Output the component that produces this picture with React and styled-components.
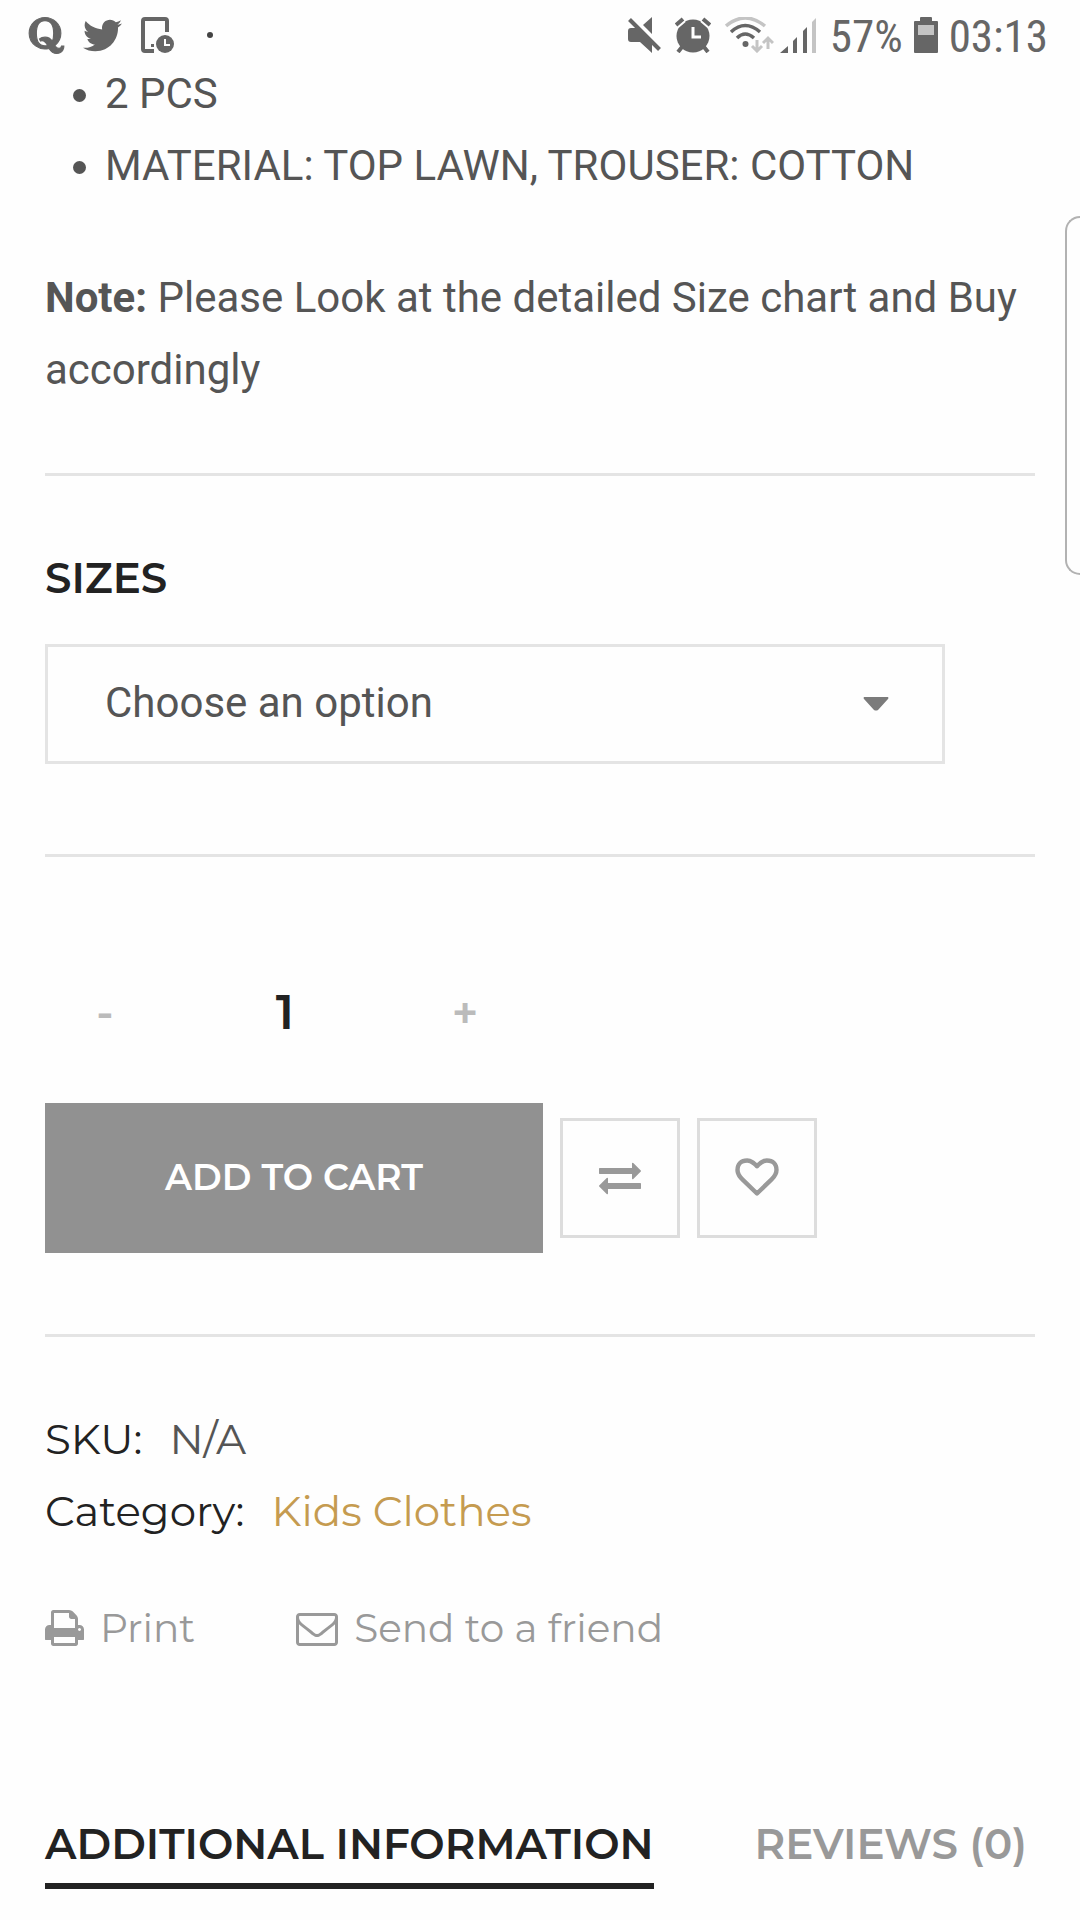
import React, { useState } from "react";
import styled, { createGlobalStyle } from "styled-components";
import { FaQuora, FaTwitter } from "react-icons/fa";

const bodyFont = `Roboto, "Liberation Sans", sans-serif`;
const headingFont = `Montserrat, Inter, "Open Sans", sans-serif`;
const ink = "#222";
const text = "#555";
const muted = "#999";
const rule = "#e4e4e4";

const GlobalStyle = createGlobalStyle`
  *, *::before, *::after { box-sizing: border-box; }
  body { margin: 0; background: #fefefe; color: ${text}; font-family: ${bodyFont}; font-size: 42px; line-height: 72px; }
  button, input, select { font: inherit; color: inherit; margin: 0; padding: 0; border: 0; background: none; border-radius: 0; }
  button { cursor: pointer; }
  a { text-decoration: none; }
  svg { display: block; flex: none; }
`;

const Page = styled.div`
  position: relative;
  overflow: hidden;
`;

const StatusBar = styled.header`
  display: flex;
  justify-content: space-between;
  height: 58px;
  padding: 12px 32px 0 26px;
  color: #666;
`;

const StatusGroup = styled.div`
  display: flex;
  align-items: center;
  gap: ${(p) => p.$gap}px;
`;

const StatusText = styled.span`
  padding-top: 4px;
  font-family: "Roboto Condensed", "Liberation Sans Narrow", Roboto, sans-serif;
  font-size: 45px;
  line-height: 46px;
`;

const MoreDot = styled.span`
  width: 6px;
  height: 6px;
  margin-left: 16px;
  border-radius: 50%;
  background: #444;
`;

const Product = styled.main`
  padding: 0 45px;
`;

const Features = styled.ul`
  margin: 0;
  padding: 0 0 0 28px;
  list-style: none;
`;

const Feature = styled.li`
  display: flex;
  align-items: center;
  gap: 19px;
  &::before {
    content: "";
    width: 13px;
    height: 13px;
    margin-top: 2px;
    border-radius: 50%;
    background: ${text};
  }
`;

const Note = styled.p`
  margin: 60px 0 67px;
`;

const Rule = styled.hr`
  height: 3px;
  margin: 0;
  border: 0;
  background: ${rule};
`;

const SizeSection = styled.section`
  display: flex;
  flex-direction: column;
  gap: 30px;
  padding: 66px 0 90px;
`;

const SizeLabel = styled.label`
  color: ${ink};
  font-family: ${headingFont};
  font-weight: 600;
`;

const SelectBox = styled.div`
  display: grid;
  align-items: center;
  width: calc(100% - 90px);
  height: 120px;
  > * { grid-area: 1 / 1; }
  svg { justify-self: end; margin-right: 56px; pointer-events: none; }
`;

const SizeSelect = styled.select`
  width: 100%;
  height: 120px;
  padding: 0 57px 2px;
  border: 3px solid ${rule};
  appearance: none;
`;

const BuySection = styled.section`
  padding: 95px 0 81px;
`;

const Quantity = styled.div`
  display: grid;
  grid-template-columns: 120px 240px 120px;
  height: 120px;
  margin-bottom: 31px;
  font-family: ${headingFont};
  font-weight: 600;
`;

const Step = styled.button`
  color: #bbb;
  font-size: 45px;
`;

const QuantityInput = styled.input`
  width: 100%;
  color: ${ink};
  font-size: 48px;
  text-align: center;
`;

const Actions = styled.div`
  display: flex;
  align-items: center;
  gap: 17px;
`;

const CartButton = styled.button`
  width: 498px;
  height: 150px;
  padding-bottom: 2px;
  background: #919191;
  color: #fff;
  font-family: ${headingFont};
  font-size: 36px;
  font-weight: 600;
`;

const IconButton = styled.button`
  display: grid;
  place-items: center;
  width: 120px;
  height: 120px;
  padding-bottom: 3px;
  border: 3px solid #ddd;
  color: ${muted};
`;

const Meta = styled.dl`
  margin: 0;
  padding: 66px 0 45px;
  font-family: ${headingFont};
`;

const MetaRow = styled.div`
  display: flex;
  gap: 27px;
  dt { color: ${ink}; }
  dd { margin: 0; }
  a { color: #c59b50; }
`;

const Share = styled.nav`
  display: flex;
  gap: 101px;
  padding-bottom: 144px;
  font-family: ${headingFont};
  font-size: 39px;
`;

const ShareLink = styled.a`
  display: flex;
  align-items: center;
  gap: 16px;
  color: ${muted};
`;

const Tabs = styled.div`
  display: flex;
  justify-content: space-between;
  padding-right: 8px;
`;

const Tab = styled.button`
  padding-bottom: 3px;
  border-bottom: 6px solid ${(p) => (p.$active ? ink : "transparent")};
  color: ${(p) => (p.$active ? ink : muted)};
  font-family: ${headingFont};
  font-weight: 600;
  white-space: nowrap;
`;

const EdgeHandle = styled.div`
  position: absolute;
  top: 216px;
  right: 0;
  width: 15px;
  height: 359px;
  border: 2px solid #b2b2b2;
  border-right: 0;
  border-radius: 20px 0 0 20px;
`;

const Glyph = ({ d, box = "0 0 1792 1792", w = 42, h = 42, bold = 0 }) => (
  <svg width={w} height={h} viewBox={box} fill="currentColor" stroke="currentColor" strokeWidth={bold} overflow="visible" aria-hidden="true">
    <path d={d} />
  </svg>
);

const exchange =
  "M1792 1184v192q0 13-9.5 22.5t-22.5 9.5h-1376v192q0 13-9.5 22.5t-22.5 9.5q-12 0-24-10l-319-320q-9-9-9-22 0-14 9-23l320-320q9-9 23-9 13 0 22.5 9.5t9.5 22.5v192h1376q13 0 22.5 9.5t9.5 22.5zm0-544q0 14-9 23l-320 320q-9 9-23 9-13 0-22.5-9.5t-9.5-22.5v-192h-1376q-13 0-22.5-9.5t-9.5-22.5v-192q0-13 9.5-22.5t22.5-9.5h1376v-192q0-14 9-23t23-9q12 0 24 10l319 319q9 9 9 23z";
const heart =
  "M1664 596q0-81-21.5-143t-55-98.5-81.5-59.5-94-31-98-8-112 25.5-110.5 64-86.5 72-60 61.5q-18 22-49 22t-49-22q-24-28-60-61.5t-86.5-72-110.5-64-112-25.5-98 8-94 31-81.5 59.5-55 98.5-21.5 143q0 168 187 355l581 560 580-559q188-188 188-356zm128 0q0 221-229 450l-623 600q-18 18-44 18t-44-18l-624-602q-10-8-27.5-26t-55.5-65.5-68-97.5-53.5-121-23.5-138q0-220 127-344t351-124q62 0 126.5 21.5t120 58 95.5 68.5 76 68q36-36 76-68t95.5-68.5 120-58 126.5-21.5q224 0 351 124t127 344z";
const printer =
  "M448 1536h896v-256h-896v256zm0-640h896v-384h-160q-40 0-68-28t-28-68v-160h-640v640zm1152 64q0-26-19-45t-45-19-45 19-19 45 19 45 45 19 45-19 19-45zm128 0v416q0 13-9.5 22.5t-22.5 9.5h-224v160q0 40-28 68t-68 28h-960q-40 0-68-28t-28-68v-160h-224q-13 0-22.5-9.5t-9.5-22.5v-416q0-79 56.5-135.5t135.5-56.5h64v-544q0-40 28-68t68-28h672q40 0 88 20t76 48l152 152q28 28 48 76t20 88v256h64q79 0 135.5 56.5t56.5 135.5z";
const envelope =
  "M1664 1504v-768q-32 36-69 66-268 206-426 338-51 43-83 67t-86.5 48.5-102.5 24.5h-2q-48 0-102.5-24.5t-86.5-48.5-83-67q-158-132-426-338-37-30-69-66v768q0 13 9.5 22.5t22.5 9.5h1472q13 0 22.5-9.5t9.5-22.5zm0-1051v-24.5l-.5-13-3-12.5-5.5-9-9-7.5-14-2.5h-1472q-13 0-22.5 9.5t-9.5 22.5q0 168 147 284 193 152 401 317 6 5 35 29.5t46 37.5 44.5 31.5 50.5 27.5 43 9h2q20 0 43-9t50.5-27.5 44.5-31.5 46-37.5 35-29.5q208-165 401-317 54-43 100.5-115.5t46.5-131.5zm128-37v1088q0 66-47 113t-113 47h-1472q-66 0-113-47t-47-113v-1088q0-66 47-113t113-47h1472q66 0 113 47t47 113z";

const DeviceClock = () => (
  <svg width="37" height="36" viewBox="-3 0 37 36" fill="none" aria-hidden="true">
    <path d="M26 15V4q0-2-2-2H4Q2 2 2 4v28q0 2 2 2h9" stroke="currentColor" strokeWidth="4" />
    <rect x="10" y="27" width="3" height="3" fill="currentColor" />
    <circle cx="24" cy="27" r="9" fill="currentColor" />
    <path d="M24 22v6h5" stroke="#fefefe" strokeWidth="2" />
  </svg>
);

const Muted = () => (
  <svg width="33" height="36" viewBox="0 0 33 36" fill="currentColor" aria-hidden="true">
    <path d="M24 0v17L15 8zM0 14q0-3 3-3h7l14 14v11L12 25H3q-3 0-3-3z" />
    <path d="M4 0l29 29" stroke="#fefefe" strokeWidth="2" />
    <path d="M1.500 2.500L31.500 32.500" stroke="currentColor" strokeWidth="4" />
  </svg>
);

const Alarm = () => (
  <svg width="36" height="36" viewBox="0 0 36 36" fill="none" aria-hidden="true">
    <circle cx="18" cy="19" r="16.500" fill="currentColor" />
    <path d="M1 8l7-6M28 2l7 6" stroke="#fefefe" strokeWidth="8" />
    <path d="M1 8l7-6M28 2l7 6" stroke="currentColor" strokeWidth="4" />
    <path d="M7 30l-4 5M29 30l4 5" stroke="currentColor" strokeWidth="4" />
    <path d="M18 10v10h8" stroke="#fefefe" strokeWidth="3" />
  </svg>
);

const Wifi = () => (
  <svg width="49" height="36" viewBox="0 0 49 36" fill="none" aria-hidden="true">
    <path d="M1 9q19-16 39 0" stroke="#c4c4c4" strokeWidth="3.500" />
    <path d="M6 15q14-13 29 0M12 21q8-8 17 0" stroke="currentColor" strokeWidth="3.500" />
    <circle cx="20.500" cy="27" r="3" fill="currentColor" />
    <path d="M32 23v11M27 29l5 5 5-5M43 32V21M38 26l5-5 5 5" stroke="#c4c4c4" strokeWidth="3" />
  </svg>
);

const Signal = () => (
  <svg width="36" height="36" viewBox="0 0 36 36" fill="currentColor" aria-hidden="true">
    <path d="M0 36l8-7v7zM13 24l4-4v16h-4zM23 14l4-4v26h-4z" />
    <path d="M32 5l4-4v35h-4z" fill="#c4c4c4" />
  </svg>
);

const Battery = () => (
  <svg width="24" height="36" viewBox="0 0 24 36" fill="currentColor" aria-hidden="true">
    <path d="M7 0h10q1 0 1 1v3h5q1 0 1 1v30q0 1-1 1H1q-1 0-1-1V5q0-1 1-1h5V1q0-1 1-1z" />
    <path d="M4 8h16v10H4z" fill="#c4c4c4" />
  </svg>
);

export default function App() {
  const [quantity, setQuantity] = useState(1);
  const [tab, setTab] = useState("info");

  return (
    <Page>
      <GlobalStyle />
      <StatusBar>
        <StatusGroup $gap={16}>
          <FaQuora size={41} stroke="currentColor" strokeWidth={14} />
          <FaTwitter size={39} />
          <DeviceClock />
          <MoreDot />
        </StatusGroup>
        <StatusGroup $gap={14}>
          <Muted />
          <Alarm />
          <StatusGroup $gap={6}>
            <Wifi />
            <Signal />
          </StatusGroup>
          <StatusGroup $gap={11}>
            <StatusText>57%</StatusText>
            <Battery />
            <StatusText>03:13</StatusText>
          </StatusGroup>
        </StatusGroup>
      </StatusBar>

      <Product>
        <Features>
          <Feature>2 PCS</Feature>
          <Feature>MATERIAL: TOP LAWN, TROUSER: COTTON</Feature>
        </Features>
        <Note>
          <strong>Note:</strong> Please Look at the detailed Size chart and Buy accordingly
        </Note>
        <Rule />

        <SizeSection>
          <SizeLabel htmlFor="size">SIZES</SizeLabel>
          <SelectBox>
            <SizeSelect id="size">
              <option>Choose an option</option>
            </SizeSelect>
            <svg width="26" height="14" viewBox="0 0 26 14" fill="#7b7b7b" aria-hidden="true">
              <path d="M1 0h24q1 1 0 2L15 13q-2 1-4 0L1 2q-1-1 0-2z" />
            </svg>
          </SelectBox>
        </SizeSection>
        <Rule />

        <BuySection>
          <Quantity>
            <Step type="button" aria-label="Decrease quantity" onClick={() => setQuantity(Math.max(1, quantity - 1))}>
              -
            </Step>
            <QuantityInput
              aria-label="Quantity"
              inputMode="numeric"
              value={quantity}
              onChange={(e) => setQuantity(Number(e.target.value) || 1)}
            />
            <Step type="button" aria-label="Increase quantity" onClick={() => setQuantity(quantity + 1)}>
              +
            </Step>
          </Quantity>
          <Actions>
            <CartButton type="button">ADD TO CART</CartButton>
            <IconButton type="button" aria-label="Compare">
              <Glyph d={exchange} />
            </IconButton>
            <IconButton type="button" aria-label="Add to wishlist">
              <Glyph d={heart} bold={60} />
            </IconButton>
          </Actions>
        </BuySection>
        <Rule />

        <Meta>
          <MetaRow>
            <dt>SKU:</dt>
            <dd>N/A</dd>
          </MetaRow>
          <MetaRow>
            <dt>Category:</dt>
            <dd>
              <a href="#kids-clothes">Kids Clothes</a>
            </dd>
          </MetaRow>
        </Meta>

        <Share aria-label="Share">
          <ShareLink href="#print">
            <Glyph d={printer} box="64 0 1664 1792" w={39} />
            Print
          </ShareLink>
          <ShareLink href="#send">
            <Glyph d={envelope} />
            Send to a friend
          </ShareLink>
        </Share>

        <Tabs role="tablist">
          <Tab type="button" role="tab" aria-selected={tab === "info"} $active={tab === "info"} onClick={() => setTab("info")}>
            ADDITIONAL INFORMATION
          </Tab>
          <Tab type="button" role="tab" aria-selected={tab === "reviews"} $active={tab === "reviews"} onClick={() => setTab("reviews")}>
            REVIEWS (0)
          </Tab>
        </Tabs>
      </Product>
      <EdgeHandle />
    </Page>
  );
}
